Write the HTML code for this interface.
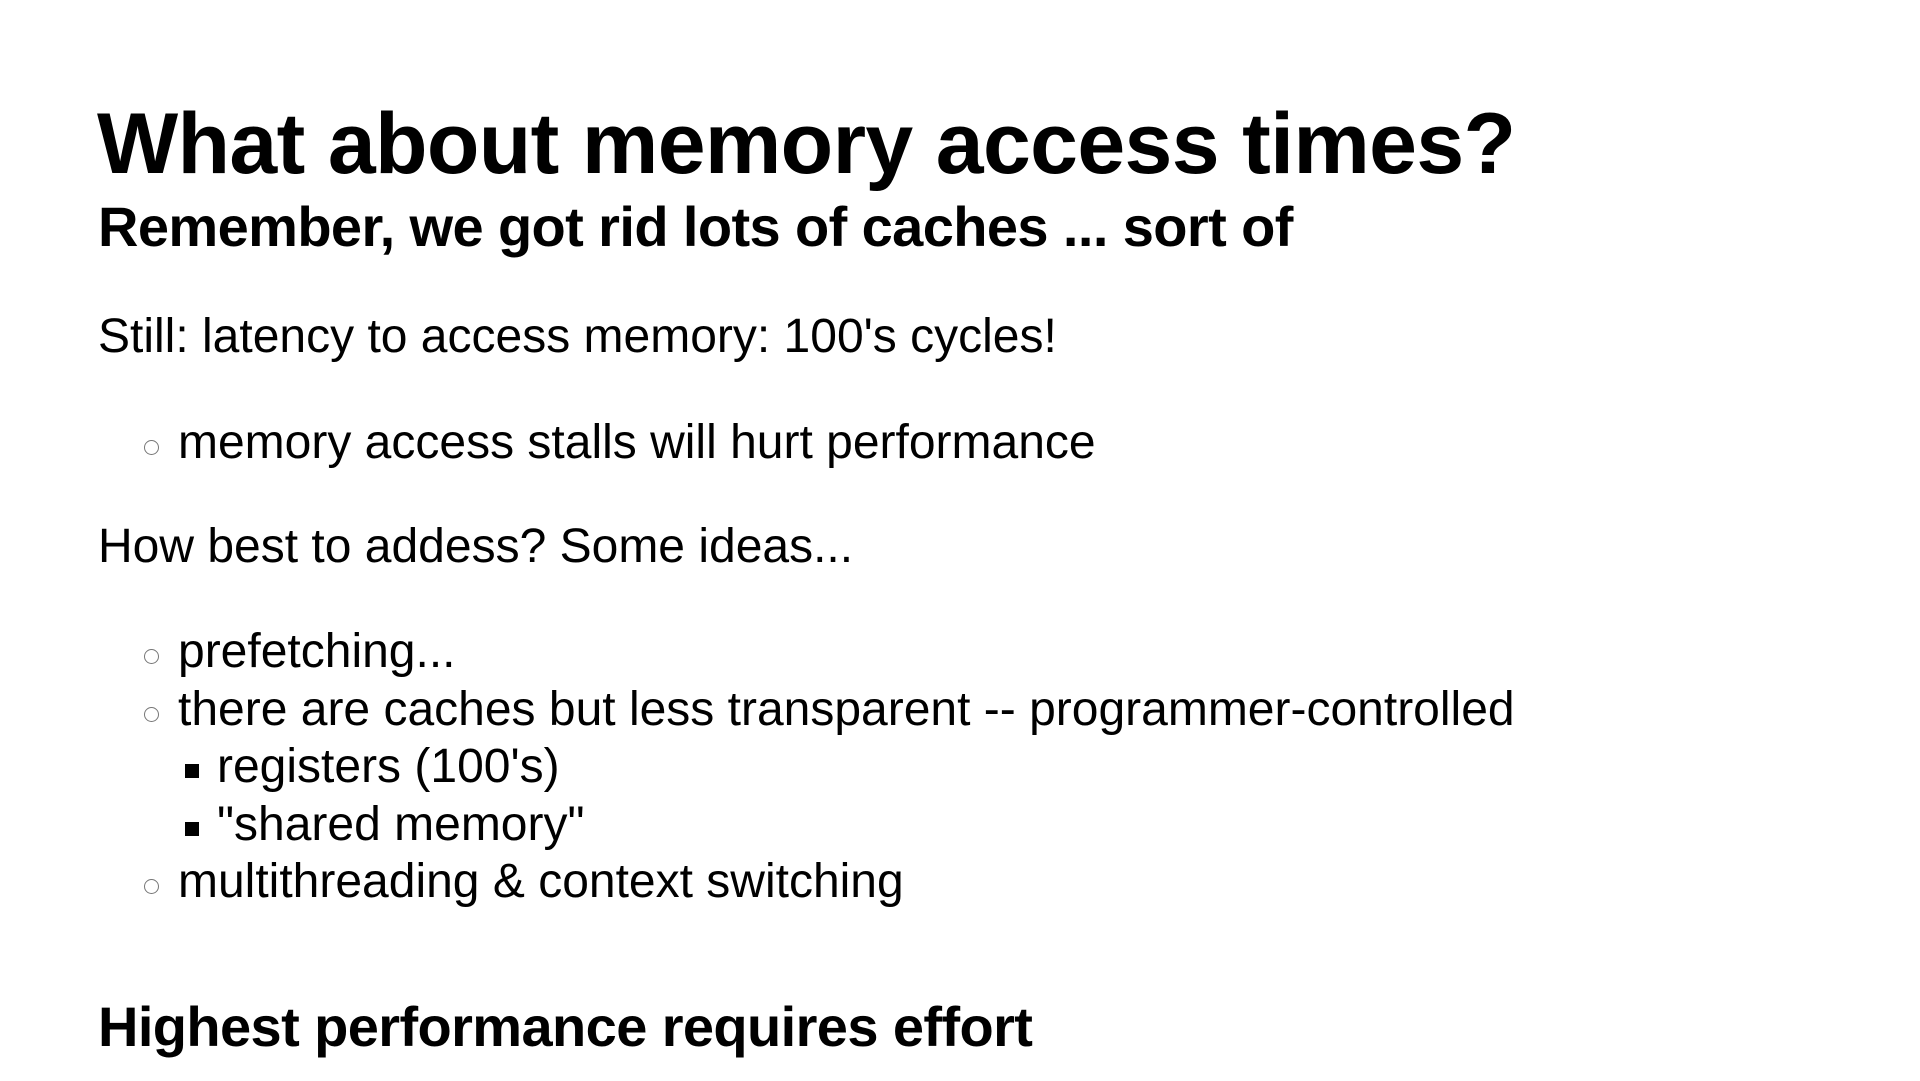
<!DOCTYPE html>
<html><head><meta charset="utf-8"><style>
html,body{margin:0;padding:0;background:#fff;width:1920px;height:1081px;overflow:hidden}
body{position:relative;font-family:"Liberation Sans",Arial,sans-serif;color:#000}
.t{position:absolute;white-space:nowrap;line-height:1}
.h1{font-size:86px;font-weight:bold;left:97px;top:101px;letter-spacing:-0.65px}
.h2{font-size:56px;font-weight:bold;left:98px;letter-spacing:-0.6px}
.b{font-size:48px;}
.c{position:absolute;border:1px solid #777;border-radius:50%;box-sizing:border-box;width:15px;height:15px}
.s{position:absolute;width:14px;height:14px;background:#000}
</style></head><body>
<div class="t h1">What about memory access times?</div>
<div class="t h2" style="top:199px">Remember, we got rid lots of caches ... sort of</div>
<div class="t b" style="left:98px;top:313px">Still: latency to access memory: 100's cycles!</div>
<div class="c" style="left:144px;top:440px"></div>
<div class="t b" style="left:178px;top:419px">memory access stalls will hurt performance</div>
<div class="t b" style="left:98px;top:523px">How best to addess? Some ideas...</div>
<div class="c" style="left:144px;top:649px"></div>
<div class="t b" style="left:178px;top:628px">prefetching...</div>
<div class="c" style="left:144px;top:707px"></div>
<div class="t b" style="left:178px;top:686px">there are caches but less transparent -- programmer-controlled</div>
<div class="s" style="left:185px;top:764px"></div>
<div class="t b" style="left:217px;top:743px">registers (100's)</div>
<div class="s" style="left:185px;top:822px"></div>
<div class="t b" style="left:217px;top:801px">"shared memory"</div>
<div class="c" style="left:144px;top:879px"></div>
<div class="t b" style="left:178px;top:858px">multithreading &amp; context switching</div>
<div class="t h2" style="top:999px">Highest performance requires effort</div>
</body></html>
